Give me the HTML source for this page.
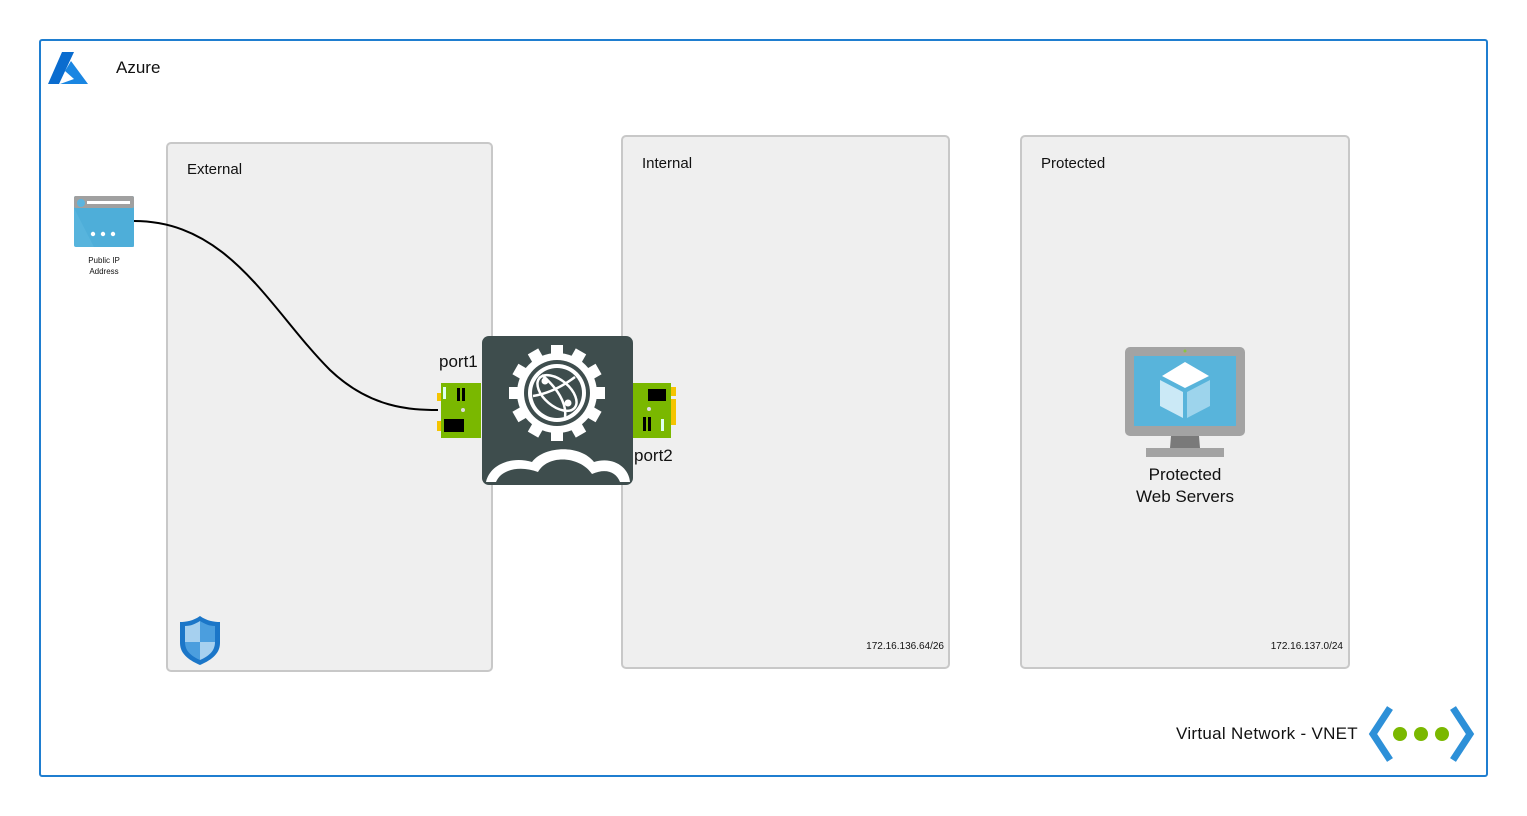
<!DOCTYPE html>
<html><head><meta charset="utf-8"><style>
body{margin:0;width:1527px;height:816px;background:#fff;position:relative;font-family:"Liberation Sans",sans-serif;overflow:hidden}
.a{position:absolute}
.panel{position:absolute;background:#efefef;border:2px solid #c8c8c8;border-radius:5px;box-sizing:border-box}
.t{position:absolute;font-size:15px;color:#111}
</style></head><body>
<div class="a" style="left:39px;top:39px;width:1449px;height:738px;border:2px solid #1f7ed0;border-radius:3px;box-sizing:border-box"></div>
<svg class="a" style="left:48px;top:52px" width="42" height="33" viewBox="0 0 42 33"><path d="M14 0 L26 0 L11 32 L0 32 Z" fill="#0a6ccf"/><path d="M23 9 L40 32 L12 32 L26 27 L17 19 Z" fill="#1a86e2"/></svg>
<div class="t" style="left:116px;top:58px;font-size:17px">Azure</div>

<div class="panel" style="left:166px;top:142px;width:327px;height:530px"></div>
<div class="t" style="left:187px;top:161px">External</div>
<div class="panel" style="left:621px;top:135px;width:329px;height:534px"></div>
<div class="t" style="left:642px;top:155px">Internal</div>
<div class="t" style="left:858px;top:641px;font-size:10px;width:86px;text-align:right">172.16.136.64/26</div>
<div class="panel" style="left:1020px;top:135px;width:330px;height:534px"></div>
<div class="t" style="left:1041px;top:155px">Protected</div>
<div class="t" style="left:1253px;top:641px;font-size:10px;width:90px;text-align:right">172.16.137.0/24</div>

<svg class="a" style="left:0;top:0" width="1527" height="816"><path d="M134 221 C230 221 270 310 330 370 C370 408 410 410 438 410" stroke="#000" stroke-width="2" fill="none"/></svg>

<svg class="a" style="left:74px;top:196px" width="61" height="51"><rect width="60" height="51" rx="2" fill="#57b4dd"/><path d="M0 12 L60 12 L60 51 L20 51 Z" fill="#46a8d6" opacity=".5"/><rect width="60" height="12" rx="2" fill="#a0a0a0"/><circle cx="7" cy="7" r="4" fill="#5bb4df"/><rect x="13" y="5" width="43" height="3" fill="#fff"/><circle cx="19" cy="38" r="2.2" fill="#fff"/><circle cx="29" cy="38" r="2.2" fill="#fff"/><circle cx="39" cy="38" r="2.2" fill="#fff"/></svg>
<div class="t" style="left:74px;top:255px;width:60px;text-align:center;font-size:8px;line-height:11px">Public IP<br>Address</div>

<svg class="a" style="left:179px;top:615px" width="42" height="50" viewBox="0 0 42 50"><path d="M21 1 C28 6 35 7 41 7 L41 28 C41 40 30 46 21 50 C12 46 1 40 1 28 L1 7 C7 7 14 6 21 1Z" fill="#1b76c8"/><path d="M21 6 L21 27 L6 27 L6 11 C12 11 16 9 21 6Z" fill="#a6d0ef"/><path d="M21 6 C26 9 30 11 36 11 L36 27 L21 27Z" fill="#4b9ede"/><path d="M6 27 L21 27 L21 45 C12 41 6 36 6 27Z" fill="#4b9ede"/><path d="M21 27 L36 27 C36 36 30 41 21 45Z" fill="#a6d0ef"/></svg>

<div class="t" style="left:439px;top:352px;font-size:17px">port1</div>
<div class="t" style="left:634px;top:446px;font-size:17px">port2</div>
<svg class="a" style="left:437px;top:383px" width="46" height="55"><rect x="0" y="10" width="6" height="8" fill="#f5c400"/><rect x="0" y="38" width="6" height="10" fill="#f5c400"/><rect x="4" y="0" width="40" height="55" fill="#7ab800"/><rect x="6" y="4" width="3" height="12" fill="#dfe" /><rect x="20" y="5" width="3" height="13" fill="#000"/><rect x="25" y="5" width="3" height="13" fill="#000"/><circle cx="26" cy="27" r="2" fill="#ddd"/><rect x="7" y="36" width="20" height="13" fill="#000"/></svg>
<svg class="a" style="left:631px;top:383px" width="46" height="55"><rect x="40" y="4" width="5" height="9" fill="#f5c400"/><rect x="40" y="16" width="5" height="26" fill="#f5c400"/><rect x="0" y="0" width="40" height="55" fill="#7ab800"/><rect x="17" y="6" width="18" height="12" fill="#000"/><circle cx="18" cy="26" r="2" fill="#ddd"/><rect x="12" y="34" width="3" height="14" fill="#000"/><rect x="17" y="34" width="3" height="14" fill="#000"/><rect x="30" y="36" width="3" height="12" fill="#dfe"/></svg>

<svg class="a" style="left:482px;top:336px" width="151" height="149" viewBox="0 0 151 149"><rect width="151" height="149" rx="7" fill="#3e4d4d"/>
<g transform="translate(75,57)" fill="#fff">
<g><rect x="-6" y="-48" width="12" height="12"/><rect x="-6" y="-48" width="12" height="12" transform="rotate(30)"/><rect x="-6" y="-48" width="12" height="12" transform="rotate(60)"/><rect x="-6" y="-48" width="12" height="12" transform="rotate(90)"/><rect x="-6" y="-48" width="12" height="12" transform="rotate(120)"/><rect x="-6" y="-48" width="12" height="12" transform="rotate(150)"/><rect x="-6" y="-48" width="12" height="12" transform="rotate(180)"/><rect x="-6" y="-48" width="12" height="12" transform="rotate(210)"/><rect x="-6" y="-48" width="12" height="12" transform="rotate(240)"/><rect x="-6" y="-48" width="12" height="12" transform="rotate(270)"/><rect x="-6" y="-48" width="12" height="12" transform="rotate(300)"/><rect x="-6" y="-48" width="12" height="12" transform="rotate(330)"/></g>
<circle r="40"/><circle r="33" fill="#3e4d4d"/><circle r="29"/><circle r="25" fill="#3e4d4d"/>
<g stroke="#fff" stroke-width="2.5" fill="none"><ellipse rx="23" ry="13" transform="rotate(40)"/><path d="M-15 -18 C0 -5 10 10 8 24"/><path d="M-24 3 C-5 0 10 -10 18 -16"/></g><circle cx="-12" cy="-12" r="3.5"/><circle cx="11" cy="10" r="3.5"/></g>
<path d="M4 146 C8 128 30 120 50 126 C62 110 98 108 112 126 C132 120 147 132 148 146 L138 146 C134 136 124 132 110 138 C98 120 66 118 56 136 C40 130 20 132 14 146Z" fill="#fff"/></svg>

<svg class="a" style="left:1124px;top:346px" width="122" height="112" viewBox="0 0 122 112"><rect x="1" y="1" width="120" height="89" rx="5" fill="#a3a3a3"/><rect x="10" y="10" width="102" height="70" fill="#58b4db"/><circle cx="61" cy="5" r="1.5" fill="#8bc43f"/><path d="M47 90 L75 90 L76 102 L46 102Z" fill="#7a7a7a"/><rect x="22" y="102" width="78" height="9" fill="#a3a3a3"/><path d="M61 16 L85 30 L61 42 L38 30Z" fill="#fff"/><path d="M36 34 L59 46 L59 72 L36 60Z" fill="#cbe9f6"/><path d="M63 46 L86 34 L86 60 L63 72Z" fill="#9dd4ec"/></svg>
<div class="t" style="left:1110px;top:464px;width:150px;text-align:center;font-size:17px;line-height:22px">Protected<br>Web Servers</div>

<div class="t" style="left:1176px;top:724px;font-size:17px;letter-spacing:0.3px">Virtual Network - VNET</div>
<svg class="a" style="left:1368px;top:704px" width="107" height="60"><path d="M22 4 L5 30 L22 56" stroke="#2d90d8" stroke-width="7" fill="none"/><path d="M85 4 L102 30 L85 56" stroke="#2d90d8" stroke-width="7" fill="none"/><circle cx="32" cy="30" r="7" fill="#7ab800"/><circle cx="53" cy="30" r="7" fill="#7ab800"/><circle cx="74" cy="30" r="7" fill="#7ab800"/></svg>
</body></html>
